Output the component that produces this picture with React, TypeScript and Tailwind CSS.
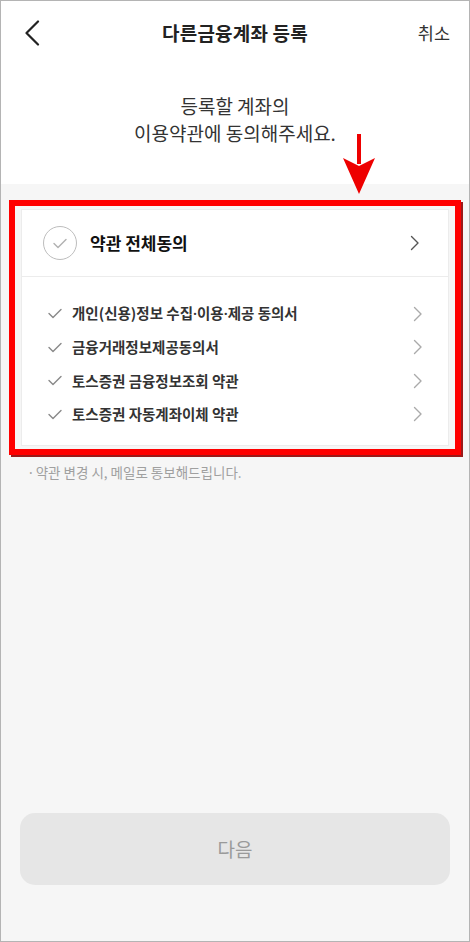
import React from "react";

const FONT = { fontFamily: '"Noto Sans CJK KR", "Noto Sans", sans-serif' };
const LATIN = { fontFamily: '"Noto Sans", sans-serif' };

function Chevron({ className = "" }: { className?: string }) {
  return (
    <svg width="10" height="16" viewBox="0 0 10 16" className={className} fill="none">
      <path d="M1.5 1.5 L8 8 L1.5 14.5" stroke="currentColor" strokeWidth="1.4" strokeLinecap="round" strokeLinejoin="round" />
    </svg>
  );
}

function Check({ className = "" }: { className?: string }) {
  return (
    <svg width="14" height="11" viewBox="0 0 14 11" className={className} fill="none">
      <path d="M1 5.5 L5 9.5 L13 1.5" stroke="currentColor" strokeWidth="1.4" strokeLinecap="round" strokeLinejoin="round" />
    </svg>
  );
}

// narrow middle dots between words
function Dotted({ text }: { text: string }) {
  const parts = text.split("·");
  return (
    <>
      {parts.map((p, i) => (
        <React.Fragment key={i}>
          {i > 0 && <span style={LATIN}>·</span>}
          {p}
        </React.Fragment>
      ))}
    </>
  );
}

const terms = [
  "개인(신용)정보 수집·이용·제공 동의서",
  "금융거래정보제공동의서",
  "토스증권 금융정보조회 약관",
  "토스증권 자동계좌이체 약관",
];

export default function App() {
  return (
    <div
      className="relative w-[470px] h-[942px] border border-[#b4b4b4] flex flex-col bg-[#f6f6f6] overflow-hidden"
      style={FONT}
    >
      {/* top bar + heading */}
      <div className="bg-white h-[183px] flex flex-col">
        <div className="h-[64px] flex items-center justify-between pl-[23px] pr-[19px]">
          <svg width="16" height="26" viewBox="0 0 16 26" fill="none">
            <path d="M14 1.5 L2.5 13 L14 24.5" stroke="#222" strokeWidth="2.2" strokeLinecap="round" strokeLinejoin="round" />
          </svg>
          <div className="absolute left-0 right-0 top-0 h-[64px] flex items-center justify-center pointer-events-none">
            <span className="text-[19px] font-bold text-[#222] tracking-[0.2px]">다른금융계좌 등록</span>
          </div>
          <span className="text-[17.5px] text-[#333]">취소</span>
        </div>
        <div className="mt-[27px] text-center text-[19px] leading-[27px] text-[#333]">
          <p>등록할 계좌의</p>
          <p>이용약관에 동의해주세요.</p>
        </div>
      </div>

      {/* terms card */}
      <div className="px-[8px] pt-[16px]">
        <div className="border-[6px] border-[#ff0000] shadow-[2px_2px_0_#9b1a1a] px-[6px] py-[3px]">
          <div className="bg-white border border-[#ececec]">
            <div className="h-[67px] flex items-center pl-[21px] pr-[28px] border-b border-[#ececec]">
              <div className="w-[34px] h-[34px] rounded-full border border-[#bdbdbd] flex items-center justify-center text-[#b0b0b0]">
                <Check />
              </div>
              <span className="ml-[13px] text-[17px] font-bold text-[#111]">약관 전체동의</span>
              <Chevron className="ml-auto text-[#555]" />
            </div>
            <div className="pt-[20px] pb-[14px] pl-[26px] pr-[25px] flex flex-col">
              {terms.map((t) => (
                <div key={t} className="h-[33.5px] flex items-center">
                  <Check className="text-[#888]" />
                  <span className="ml-[10px] text-[14.5px] font-semibold text-[#333]">
                    <Dotted text={t} />
                  </span>
                  <Chevron className="ml-auto text-[#aaa]" />
                </div>
              ))}
            </div>
          </div>
        </div>
      </div>

      <p className="mt-[7px] pl-[28px] text-[13.5px] text-[#a0a0a0]">
        <span style={LATIN}>·</span> 약관 변경 시, 메일로 통보해드립니다.
      </p>

      <div className="mt-auto px-[19px] pb-[56px]">
        <div className="h-[72px] rounded-[15px] bg-[#e6e6e6] flex items-center justify-center">
          <span className="text-[19px] text-[#9a9a9a]">다음</span>
        </div>
      </div>

      {/* pointer arrow */}
      <svg className="absolute left-[340px] top-[133px]" width="36" height="62" viewBox="0 0 36 62">
        <path d="M16 0 H20 V30 H16 Z" fill="#ee0000" />
        <path d="M2 24 L18 60 L34 24 L18 32 Z" fill="#ee0000" />
      </svg>
    </div>
  );
}
